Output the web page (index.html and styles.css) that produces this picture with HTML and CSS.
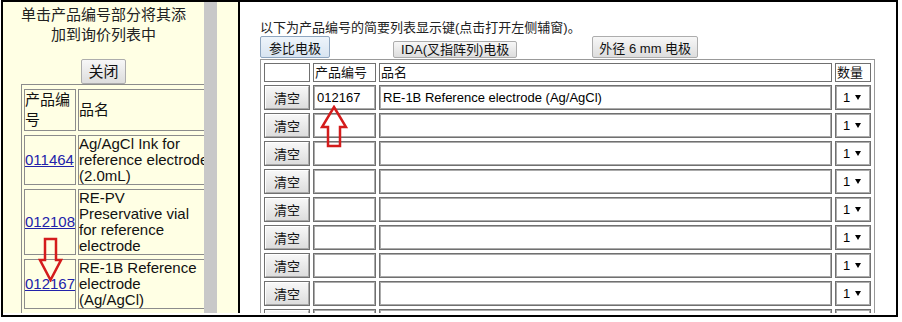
FILE: index.html
```html
<!DOCTYPE html>
<html lang="zh-CN">
    <head>
        <meta charset="utf-8" />
        <title>询价列表</title>
        <link rel="stylesheet" href="styles.css">
    </head>

    <body>
        <div class="frame">
            <!-- left helper pane -->
            <div class="side">
                <p class="hint">单击产品编号部分将其添加到询价列表中</p>
                <div class="close-row"><button class="btn btn-close">关闭</button></div>
                <table class="picked">
                    <tr class="heading">
                        <td class="code">产品编号</td>
                        <td class="name">品名</td>
                    </tr>
                    <tr>
                        <td class="code"><a href="#">011464</a></td>
                        <td class="name">Ag/AgCl Ink for reference electrode (2.0mL)</td>
                    </tr>
                    <tr>
                        <td class="code"><a href="#">012108</a></td>
                        <td class="name">RE-PV Preservative vial for reference electrode</td>
                    </tr>
                    <tr>
                        <td class="code"><a href="#">012167</a></td>
                        <td class="name">RE-1B Reference electrode (Ag/AgCl)</td>
                    </tr>
                </table>
                <svg class="arrow arrow-down" width="25" height="45" viewBox="0 0 25 45">
                    <path d="M7 2 H18 V23 H23 L12.5 43 L2 23 H7 Z" />
                </svg>
            </div>
            <div class="scroll"></div>
            <div class="gutter"></div>

            <!-- inquiry form -->
            <div class="main">
                <p class="intro">以下为产品编号的简要列表显示键(点击打开左侧辅窗)。</p>
                <div class="tabs">
                    <button class="btn tab tab-active">参比电极</button>
                    <button class="btn tab tab-ida">IDA(叉指阵列)电极</button>
                    <button class="btn tab tab-od">外径 6 mm 电极</button>
                </div>
                <table class="order">
                    <tr class="heading">
                        <td class="c-clear"></td>
                        <td class="c-code">产品编号</td>
                        <td class="c-name">品名</td>
                        <td class="c-qty">数量</td>
                    </tr>
                    <tr>
                        <td><button class="btn clear">清空</button></td>
                        <td><input type="text" value="012167" /></td>
                        <td><input type="text" value="RE-1B Reference electrode (Ag/AgCl)" /></td>
                        <td><span class="qty">1<i class="caret"></i></span></td>
                    </tr>
                    <tr>
                        <td><button class="btn clear">清空</button></td>
                        <td><input type="text" /></td>
                        <td><input type="text" /></td>
                        <td><span class="qty">1<i class="caret"></i></span></td>
                    </tr>
                    <tr>
                        <td><button class="btn clear">清空</button></td>
                        <td><input type="text" /></td>
                        <td><input type="text" /></td>
                        <td><span class="qty">1<i class="caret"></i></span></td>
                    </tr>
                    <tr>
                        <td><button class="btn clear">清空</button></td>
                        <td><input type="text" /></td>
                        <td><input type="text" /></td>
                        <td><span class="qty">1<i class="caret"></i></span></td>
                    </tr>
                    <tr>
                        <td><button class="btn clear">清空</button></td>
                        <td><input type="text" /></td>
                        <td><input type="text" /></td>
                        <td><span class="qty">1<i class="caret"></i></span></td>
                    </tr>
                    <tr>
                        <td><button class="btn clear">清空</button></td>
                        <td><input type="text" /></td>
                        <td><input type="text" /></td>
                        <td><span class="qty">1<i class="caret"></i></span></td>
                    </tr>
                    <tr>
                        <td><button class="btn clear">清空</button></td>
                        <td><input type="text" /></td>
                        <td><input type="text" /></td>
                        <td><span class="qty">1<i class="caret"></i></span></td>
                    </tr>
                    <tr>
                        <td><button class="btn clear">清空</button></td>
                        <td><input type="text" /></td>
                        <td><input type="text" /></td>
                        <td><span class="qty">1<i class="caret"></i></span></td>
                    </tr>
                    <tr>
                        <td><button class="btn clear">清空</button></td>
                        <td><input type="text" /></td>
                        <td><input type="text" /></td>
                        <td><span class="qty">1<i class="caret"></i></span></td>
                    </tr>
                    <tr>
                        <td><button class="btn clear">清空</button></td>
                        <td><input type="text" /></td>
                        <td><input type="text" /></td>
                        <td><span class="qty">1<i class="caret"></i></span></td>
                    </tr>
                </table>
                <svg class="arrow arrow-up" width="28" height="44" viewBox="0 0 28 44">
                    <path d="M14 2 L26 22 H20 V41 H8 V22 H2 Z" />
                </svg>
            </div>
        </div>
    </body>
</html>
```

FILE: styles.css
```css
body {
    margin: 0;
    background: #fff;
    font-family: "Liberation Sans", "Noto Sans CJK SC", sans-serif;
    color: #111;
}

.frame {
    display: flex;
    margin-left: 1px;
    width: 893px;
    height: 311px;
    padding-bottom: 2px;
    border: 2px solid #000;
    background: #fff;
}

/* left pane */

.side {
    position: relative;
    width: 201px;
    flex: none;
    overflow: hidden;
    background: #ffffe4;
    font-size: 15px;
}

.scroll {
    width: 13px;
    flex: none;
    background: #c8c8c8;
}

.gutter {
    width: 21px;
    flex: none;
    background: #ffffe4;
    border-right: 2px solid #000;
}

.hint {
    margin: 0;
    padding: 3px 16px 0;
    line-height: 20px;
    text-align: center;
    color: #222;
}

.close-row {
    margin-top: 14px;
    text-align: center;
}

.btn {
    font-family: inherit;
    color: #111;
    border: 1px solid #adadad;
    border-radius: 2px;
    background: linear-gradient(#f7f7f7, #dddddd);
}

.btn-close {
    height: 25px;
    padding: 0 6px;
    font-size: 15px;
    line-height: 23px;
}

.picked {
    width: 192px;
    margin-left: 18px;
    table-layout: fixed;
    border: 1px solid #8c8c8c;
    border-spacing: 2px 4px;
}

.picked td {
    padding: 0;
    border: 1px solid #8c8c8c;
    line-height: 16px;
    vertical-align: middle;
    text-align: left;
}

.picked tr.heading td {
    line-height: 20px;
}

.picked td.code {
    width: 50px;
}

.picked td.name {
    width: 130px;
}

.picked a {
    color: #2222aa;
}

.arrow {
    position: absolute;
    fill: none;
    stroke: #d41c1c;
    stroke-width: 2.5;
}

.arrow-down {
    left: 35px;
    top: 235px;
}

/* right pane */

.main {
    position: relative;
    flex: 1;
    overflow: hidden;
    padding: 18px 0 0 20px;
    background: #fff;
    font-size: 13px;
}

.intro {
    margin: 0;
    line-height: 16px;
    color: #222;
}

.tabs {
    display: flex;
    align-items: flex-end;
    height: 22px;
}

.tab {
    height: 22px;
    padding: 0 8px;
    font-size: 13px;
}

.tab-active {
    border-color: #8fa6c0;
    background: linear-gradient(#eef4fb, #d8e4f1);
}

.tab-ida {
    height: 17px;
    padding: 0 7px;
    margin-left: 63px;
    line-height: 15px;
}

.tab-od {
    padding: 0 6px;
    margin-left: 75px;
}

.order {
    width: 611px;
    margin-top: 1px;
    table-layout: fixed;
    border: 1px solid #999;
    border-spacing: 3px;
}

.order td {
    padding: 0;
    border: 1px solid #707070;
    height: 23px;
    vertical-align: middle;
}

.order tr.heading td {
    height: 17px;
    line-height: 17px;
    padding-left: 1px;
}

.order .c-clear {
    width: 43px;
}

.order .c-code {
    width: 60px;
}

.order .c-name {
    width: 450px;
}

.order .c-qty {
    width: 33px;
}

.order .clear {
    display: block;
    width: 100%;
    height: 23px;
    padding: 0;
    font-size: 13px;
    border-color: #fff #a8a8a8 #a8a8a8 #fff;
    border-radius: 0;
}

.order input {
    display: block;
    box-sizing: border-box;
    width: 100%;
    height: 23px;
    margin: 0;
    padding: 0 2px;
    border: 1px solid #ababab;
    font: 13px "Liberation Sans", "Noto Sans CJK SC", sans-serif;
    color: #000;
    background: #fff;
}

.qty {
    display: flex;
    align-items: center;
    box-sizing: border-box;
    height: 23px;
    padding-left: 6px;
    border: 1px solid #ababab;
    background: #fff;
    color: #000;
}

.caret {
    width: 0;
    height: 0;
    margin-left: 5px;
    border-left: 3px solid transparent;
    border-right: 3px solid transparent;
    border-top: 5px solid #000;
}

.arrow-up {
    left: 80px;
    top: 103px;
}
```
